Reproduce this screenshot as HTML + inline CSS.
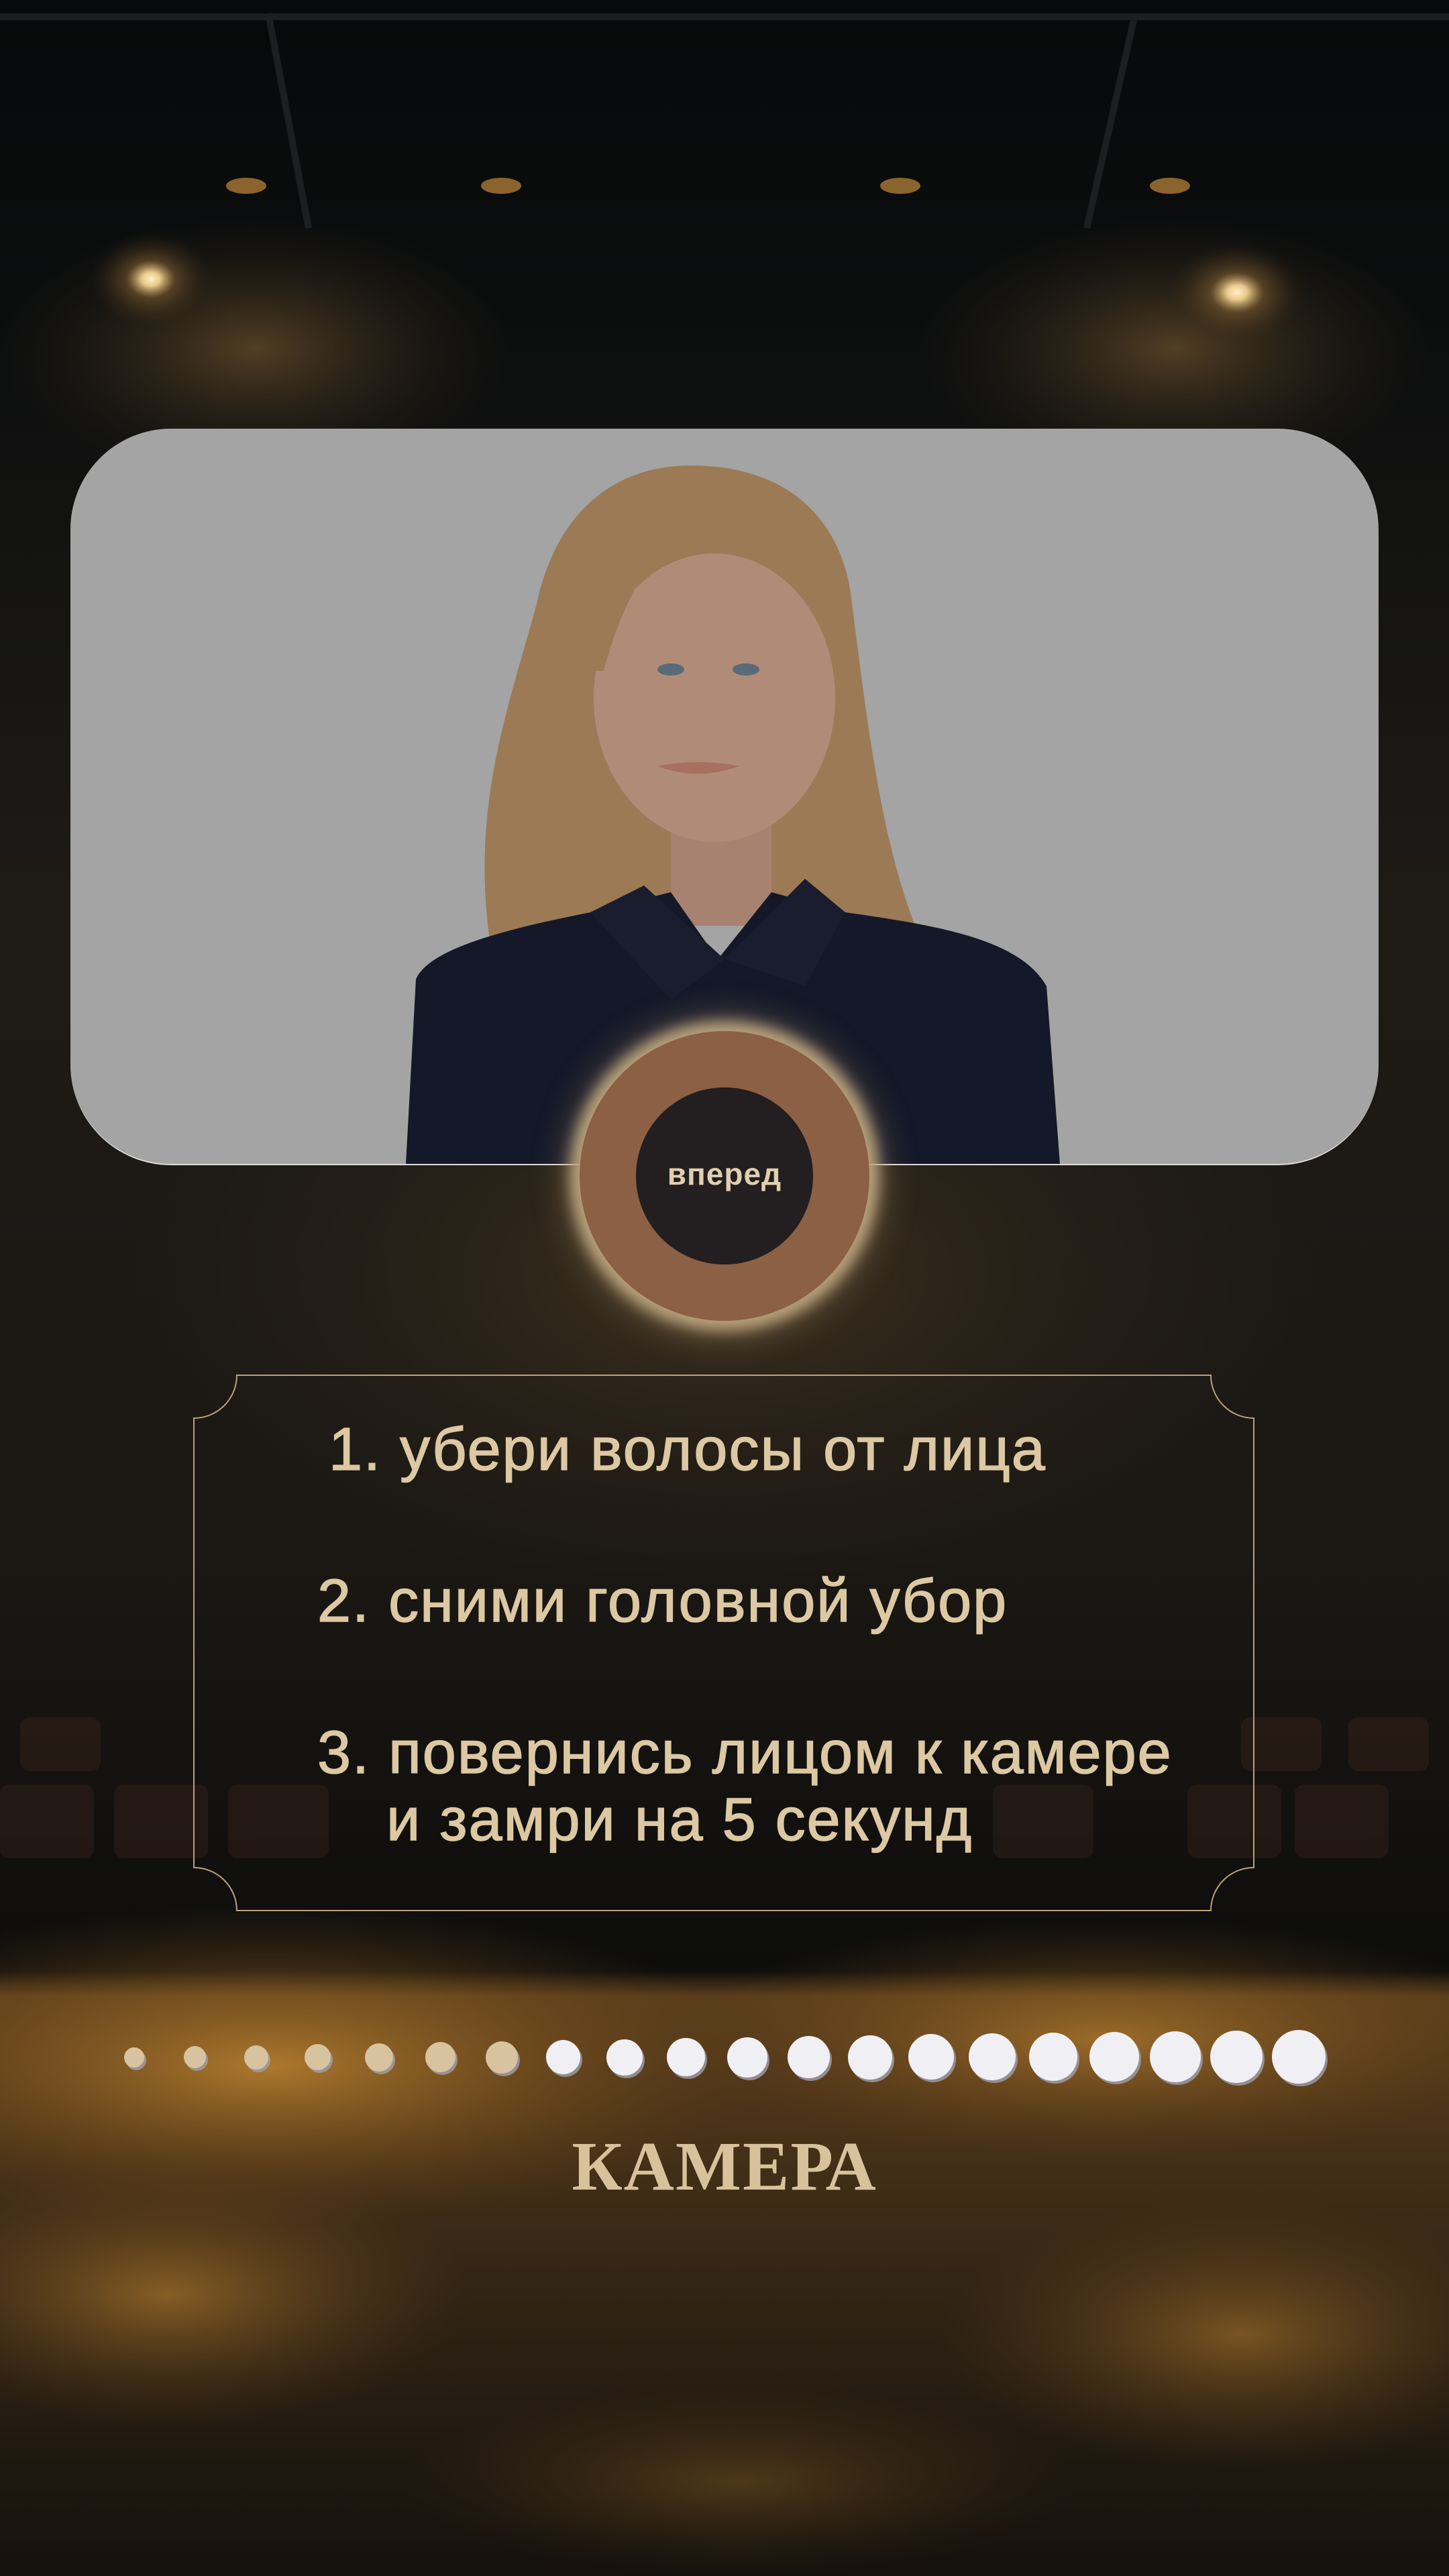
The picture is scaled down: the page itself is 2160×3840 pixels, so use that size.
<!DOCTYPE html>
<html><head><meta charset="utf-8"><style>
html,body{margin:0;padding:0}
body{width:2160px;height:3840px;position:relative;overflow:hidden;background:#0d0f10;font-family:"Liberation Sans",sans-serif}
.bg{position:absolute;left:0;top:0;width:2160px;height:3840px}
.card{position:absolute;left:105px;top:639px;width:1950px;height:1096px;border-radius:150px;overflow:hidden;background:#a3a4a3;border-bottom:2px solid #ddd}
.btn{position:absolute;left:864px;top:1537px;width:432px;height:432px;border-radius:50%;background:#8b6044;box-shadow:0 0 20px 14px #b9a27c,0 0 50px 22px rgba(200,175,130,.35)}
.btn .in{position:absolute;left:84px;top:84px;width:264px;height:264px;border-radius:50%;background:#231e1f;color:#e0cfae;font-size:46px;font-weight:bold;text-align:center;line-height:258px;letter-spacing:1px}
.box{position:absolute;left:289px;top:2050px}
.t{position:absolute;color:#dcc8a2;font-size:90px;white-space:nowrap;letter-spacing:2px;-webkit-text-stroke:1.5px #dcc8a2}
.dot{position:absolute;border-radius:50%;box-shadow:3px 4px 0 rgba(160,160,175,.8)}
.title{position:absolute;left:0;width:2160px;top:3170px;text-align:center;font-family:"Liberation Serif",serif;font-size:104px;font-weight:bold;color:#d8c29c;letter-spacing:2px}
</style></head><body>
<svg class="bg" viewBox="0 0 2160 3840">
<defs>
<radialGradient id="sp" cx="50%" cy="50%" r="50%"><stop offset="0" stop-color="#fff2c8"/><stop offset=".15" stop-color="#e8c98a"/><stop offset=".4" stop-color="#7a5a30" stop-opacity=".6"/><stop offset="1" stop-color="#3a2a18" stop-opacity="0"/></radialGradient>
<radialGradient id="haze" cx="50%" cy="50%" r="50%"><stop offset="0" stop-color="#8a6536" stop-opacity=".55"/><stop offset="1" stop-color="#3a2a18" stop-opacity="0"/></radialGradient>
<radialGradient id="fl" cx="50%" cy="50%" r="50%"><stop offset="0" stop-color="#b8802f" stop-opacity=".9"/><stop offset="1" stop-color="#6a4318" stop-opacity="0"/></radialGradient>
<linearGradient id="main" x1="0" y1="0" x2="0" y2="1"><stop offset="0" stop-color="#07090a"/><stop offset=".12" stop-color="#0c0e0e"/><stop offset=".35" stop-color="#1e1b17"/><stop offset=".6" stop-color="#1b1814"/><stop offset=".765" stop-color="#0d0d0c"/><stop offset=".775" stop-color="#5a3e1c"/><stop offset=".82" stop-color="#4a3318"/><stop offset=".9" stop-color="#2e2214"/><stop offset="1" stop-color="#15110d"/></linearGradient>
</defs>
<rect width="2160" height="3840" fill="url(#main)"/>
<ellipse cx="1080" cy="1900" rx="900" ry="500" fill="url(#haze)" opacity=".6"/>
<ellipse cx="380" cy="520" rx="380" ry="200" fill="url(#haze)"/>
<ellipse cx="1750" cy="520" rx="380" ry="200" fill="url(#haze)"/>
<ellipse cx="225" cy="416" rx="90" ry="70" fill="url(#sp)"/>
<ellipse cx="1844" cy="436" rx="100" ry="75" fill="url(#sp)"/>
<g fill="#c08a3a" opacity=".7"><ellipse cx="367" cy="277" rx="30" ry="12"/><ellipse cx="747" cy="277" rx="30" ry="12"/><ellipse cx="1342" cy="277" rx="30" ry="12"/><ellipse cx="1744" cy="277" rx="30" ry="12"/></g>
<g stroke="#1c1f20" stroke-width="10"><line x1="400" y1="20" x2="460" y2="340"/><line x1="1690" y1="30" x2="1620" y2="340"/><line x1="0" y1="25" x2="2160" y2="25"/></g>
<g fill="#4a2a20" opacity=".3">
<rect x="0" y="2660" width="140" height="110" rx="14"/><rect x="170" y="2660" width="140" height="110" rx="14"/><rect x="340" y="2660" width="150" height="110" rx="14"/><rect x="1770" y="2660" width="140" height="110" rx="14"/><rect x="1930" y="2660" width="140" height="110" rx="14"/><rect x="1480" y="2660" width="150" height="110" rx="14"/>
<rect x="30" y="2560" width="120" height="80" rx="14"/><rect x="2010" y="2560" width="120" height="80" rx="14"/><rect x="1850" y="2560" width="120" height="80" rx="14"/></g>
<ellipse cx="400" cy="3080" rx="750" ry="240" fill="url(#fl)"/>
<ellipse cx="1650" cy="3040" rx="650" ry="180" fill="url(#fl)" opacity=".8"/>
<ellipse cx="250" cy="3420" rx="450" ry="200" fill="url(#fl)" opacity=".7"/>
<ellipse cx="1850" cy="3480" rx="450" ry="200" fill="url(#fl)" opacity=".6"/>
<ellipse cx="1100" cy="3700" rx="500" ry="140" fill="url(#fl)" opacity=".35"/>
</svg>

<div class="card">
<svg width="1950" height="1096" viewBox="105 639 1950 1096">
<path d="M731 1408 C700 1200 760 1050 800 900 C830 760 920 690 1040 694 C1190 698 1260 790 1270 900 C1290 1050 1310 1250 1370 1395 L1200 1370 L900 1380 Z" fill="#9c7a56"/>
<rect x="1000" y="1180" width="150" height="200" fill="#a88270"/>
<ellipse cx="1065" cy="1040" rx="180" ry="215" fill="#b08c78"/>
<path d="M870 1000 C860 820 950 730 1060 735 C1000 800 940 850 900 1000 Z" fill="#9c7a56"/>
<path d="M1060 735 C1180 740 1250 830 1245 960 C1210 860 1140 790 1060 735 Z" fill="#9c7a56"/>
<path d="M605 1735 L620 1460 C640 1410 780 1380 880 1360 L1000 1330 L1070 1430 L1150 1330 L1260 1360 C1400 1380 1520 1400 1560 1470 L1580 1735 Z" fill="#151828"/>
<path d="M880 1360 L960 1320 L1080 1430 L1000 1490 Z M1260 1360 L1200 1310 L1080 1430 L1200 1470 Z" fill="#1a1d2d"/>
<g fill="#5a6a78"><ellipse cx="1000" cy="998" rx="20" ry="9"/><ellipse cx="1112" cy="998" rx="20" ry="9"/></g>
<path d="M980 1142 Q1040 1130 1102 1142 Q1040 1165 980 1142Z" fill="#a87060"/>
</svg>
</div>

<div class="btn"><div class="in">вперед</div></div>

<svg class="box" width="1584" height="800" viewBox="0 0 1584 800" style="left:288px;top:2049px">
<path d="M65 1 H1517 A64 64 0 0 0 1581 65 V735 A64 64 0 0 0 1517 799 H65 A64 64 0 0 0 1 735 V65 A64 64 0 0 0 65 1 Z" fill="none" stroke="#b8a37a" stroke-width="2"/>
</svg>
<div class="t" style="left:490px;top:2110px">1. убери волосы от лица</div>
<div class="t" style="left:473px;top:2336px">2. сними головной убор</div>
<div class="t" style="left:473px;top:2562px">3. повернись лицом к камере</div>
<div class="t" style="left:576px;top:2662px">и замри на 5 секунд</div>

<div class="dot" style="left:185px;top:3052px;width:30px;height:30px;background:#d8c3a0"></div>
<div class="dot" style="left:274px;top:3050px;width:33px;height:33px;background:#d8c3a0"></div>
<div class="dot" style="left:364px;top:3049px;width:36px;height:36px;background:#d8c3a0"></div>
<div class="dot" style="left:454px;top:3047px;width:39px;height:39px;background:#d8c3a0"></div>
<div class="dot" style="left:544px;top:3046px;width:42px;height:42px;background:#d8c3a0"></div>
<div class="dot" style="left:634px;top:3044px;width:45px;height:45px;background:#d8c3a0"></div>
<div class="dot" style="left:724px;top:3043px;width:48px;height:48px;background:#d8c3a0"></div>
<div class="dot" style="left:814px;top:3041px;width:51px;height:51px;background:#f0f0f4"></div>
<div class="dot" style="left:904px;top:3040px;width:54px;height:54px;background:#f0f0f4"></div>
<div class="dot" style="left:994px;top:3038px;width:57px;height:57px;background:#f0f0f4"></div>
<div class="dot" style="left:1084px;top:3037px;width:60px;height:60px;background:#f0f0f4"></div>
<div class="dot" style="left:1174px;top:3035px;width:63px;height:63px;background:#f0f0f4"></div>
<div class="dot" style="left:1264px;top:3034px;width:66px;height:66px;background:#f0f0f4"></div>
<div class="dot" style="left:1354px;top:3032px;width:68px;height:68px;background:#f0f0f4"></div>
<div class="dot" style="left:1444px;top:3031px;width:70px;height:70px;background:#f0f0f4"></div>
<div class="dot" style="left:1534px;top:3030px;width:72px;height:72px;background:#f0f0f4"></div>
<div class="dot" style="left:1624px;top:3029px;width:74px;height:74px;background:#f0f0f4"></div>
<div class="dot" style="left:1714px;top:3028px;width:76px;height:76px;background:#f0f0f4"></div>
<div class="dot" style="left:1804px;top:3027px;width:78px;height:78px;background:#f0f0f4"></div>
<div class="dot" style="left:1896px;top:3026px;width:80px;height:80px;background:#f0f0f4"></div>

<div class="title">КАМЕРА</div>
</body></html>
